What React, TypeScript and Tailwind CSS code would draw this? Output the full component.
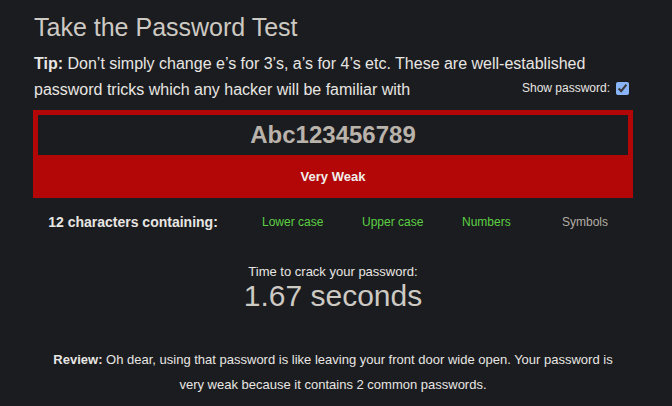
import React from "react";

export default function App() {
  const font = { fontFamily: '"Liberation Sans", Arial, sans-serif' };
  return (
    <div className="w-[672px] h-[406px] bg-[#1b1c1f] overflow-hidden" style={font}>
      <div className="w-[600px] ml-[33px] pt-[12px]">
        <h1 className="text-[25px] leading-[30px] text-[#cdc9c3] pl-[1px]">Take the Password Test</h1>
        <div className="mt-[9px] text-[16px] leading-[26px] text-[#e8e6e3] pl-[1px]">
          <div><span className="font-bold">Tip:</span> Don’t simply change e’s for 3’s, a’s for 4’s etc. These are well-established</div>
          <div className="flex items-center justify-between">
            <span>password tricks which any hacker will be familiar with</span>
            <label className="flex items-center gap-[6px] text-[12px] mr-[4px] mt-[-4px]">
              <span>Show password:</span>
              <input type="checkbox" defaultChecked className="w-[13px] h-[13px] m-0 accent-[#8ab4f8]" />
            </label>
          </div>
        </div>
        <div className="mt-[7px] bg-[#b30606] p-[5px] pb-0">
          <div className="h-[40px] bg-[#1b1c1f] flex items-center justify-center text-[24px] font-bold text-[#b9b3ab]">Abc123456789</div>
          <div className="h-[43px] flex items-center justify-center text-[13px] font-bold text-[#f0eeeb]">Very Weak</div>
        </div>
        <div className="flex items-center mt-[15px] h-[18px] text-[12px]">
          <div className="w-[200px] text-center text-[14px] font-bold text-[#e8e6e3]">12 characters containing:</div>
          <div className="w-[100px] pl-[29px] text-[#5bd043]">Lower case</div>
          <div className="w-[100px] pl-[29px] text-[#5bd043]">Upper case</div>
          <div className="w-[100px] pl-[29px] text-[#5bd043]">Numbers</div>
          <div className="w-[100px] pl-[29px] text-[#b3ada5]">Symbols</div>
        </div>
        <div className="mt-[33px] text-center">
          <div className="text-[13px] leading-[16px] text-[#e8e6e3]">Time to crack your password:</div>
          <div className="text-[30px] leading-[32px] text-[#cdc9c3]">1.67 seconds</div>
        </div>
        <div className="mt-[35px] text-center text-[13px] leading-[25px] text-[#e8e6e3] px-[14px]">
          <span className="font-bold">Review:</span> Oh dear, using that password is like leaving your front door wide open. Your password is very weak because it contains 2 common passwords.
        </div>
      </div>
    </div>
  );
}
